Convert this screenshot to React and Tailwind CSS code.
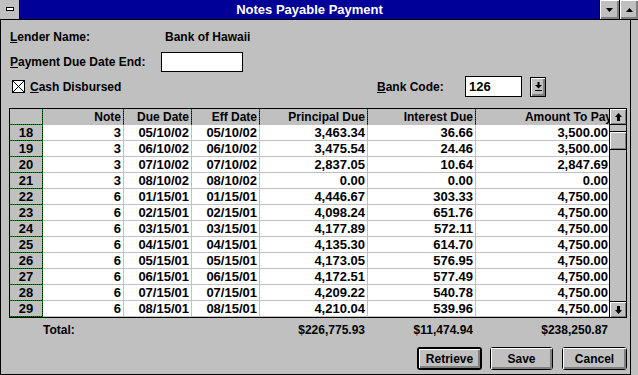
import React from 'react';

const rows = [
  ['18', '3', '05/10/02', '05/10/02', '3,463.34', '36.66', '3,500.00'],
  ['19', '3', '06/10/02', '06/10/02', '3,475.54', '24.46', '3,500.00'],
  ['20', '3', '07/10/02', '07/10/02', '2,837.05', '10.64', '2,847.69'],
  ['21', '3', '08/10/02', '08/10/02', '0.00', '0.00', '0.00'],
  ['22', '6', '01/15/01', '01/15/01', '4,446.67', '303.33', '4,750.00'],
  ['23', '6', '02/15/01', '02/15/01', '4,098.24', '651.76', '4,750.00'],
  ['24', '6', '03/15/01', '03/15/01', '4,177.89', '572.11', '4,750.00'],
  ['25', '6', '04/15/01', '04/15/01', '4,135.30', '614.70', '4,750.00'],
  ['26', '6', '05/15/01', '05/15/01', '4,173.05', '576.95', '4,750.00'],
  ['27', '6', '06/15/01', '06/15/01', '4,172.51', '577.49', '4,750.00'],
  ['28', '6', '07/15/01', '07/15/01', '4,209.22', '540.78', '4,750.00'],
  ['29', '6', '08/15/01', '08/15/01', '4,210.04', '539.96', '4,750.00'],
];

// column widths incl. gridline
const cols = [
  { label: 'Note', w: 'w-[81px]' },
  { label: 'Due Date', w: 'w-[68px]' },
  { label: 'Eff Date', w: 'w-[68px]' },
  { label: 'Principal Due', w: 'w-[108px]' },
  { label: 'Interest Due', w: 'w-[108px]' },
];

const bevel = 'shadow-[inset_1px_1px_0_#fff,inset_-1px_-1px_0_#808080]';
const bevel2 = 'shadow-[inset_1px_1px_0_#fff,inset_-1px_-1px_0_#808080,inset_-2px_-2px_0_#808080]';

const UpArrow = () => (
  <svg width="7" height="8" viewBox="0 0 7 8">
    <path d="M3.5 0 L7 4 L0 4 Z" fill="#000" />
    <rect x="2" y="4" width="3" height="4" fill="#000" />
  </svg>
);

const DownArrow = () => (
  <svg width="7" height="8" viewBox="0 0 7 8">
    <rect x="2" y="0" width="3" height="4" fill="#000" />
    <path d="M0 4 L7 4 L3.5 8 Z" fill="#000" />
  </svg>
);

const WinButton = ({ children, def, w }) => (
  <div className={`${w} h-[23px] bg-[#c0c0c0] rounded-[3px] ${def ? 'border-2' : 'border'} border-black`}>
    <div className={`w-full h-full flex items-center justify-center text-[12px] font-bold ${bevel2}`}>
      {children}
    </div>
  </div>
);

export default function App() {
  return (
    <div className="w-[638px] h-[375px] bg-[#c0c0c0] flex flex-col font-['Liberation_Sans',Arial,sans-serif] text-black select-none overflow-hidden">
      {/* Title bar */}
      <div className="h-[20px] flex border-b border-black shrink-0">
        <div className="w-[20px] border-r border-black bg-[#c0c0c0] flex items-start">
          <div className="mt-[7px] ml-[6px] w-[8px] h-[4px] bg-white border border-black"></div>
        </div>
        <div className="flex-1 bg-[#000098] text-white font-bold text-[13px] flex items-center justify-center">
          Notes Payable Payment
        </div>
        <div className={`w-[20px] border-l border-black bg-[#c0c0c0] flex items-center justify-center ${bevel2}`}>
          <svg width="7" height="4" viewBox="0 0 7 4"><path d="M0 0 L7 0 L3.5 4 Z" fill="#000" /></svg>
        </div>
        <div className={`w-[19px] border-l border-black bg-[#c0c0c0] flex items-center justify-center ${bevel2}`}>
          <svg width="7" height="4" viewBox="0 0 7 4"><path d="M3.5 0 L7 4 L0 4 Z" fill="#000" /></svg>
        </div>
      </div>

      {/* Client */}
      <div className="flex-1 flex">
        <div className="w-[631px] border-l border-r border-b border-black pl-[8px] flex flex-col">
          {/* Lender */}
          <div className="mt-[10px] h-[14px] flex items-center pl-[1px] text-[12px] font-bold">
            <div className="w-[155px]"><span className="underline">L</span>ender Name:</div>
            <div>Bank of Hawaii</div>
          </div>

          {/* Payment due */}
          <div className="mt-[8px] h-[20px] flex items-center pl-[1px] text-[12px] font-bold">
            <div className="w-[151px]"><span className="underline">P</span>ayment Due Date End:</div>
            <div className="w-[82px] h-[20px] bg-white border border-black"></div>
          </div>

          {/* Cash / bank code */}
          <div className="mt-[4px] h-[21px] flex items-center text-[12px] font-bold">
            <div className="w-[368px] flex items-center pl-[3px]">
              <svg width="13" height="13" viewBox="0 0 13 13" className="shrink-0">
                <rect x="0.5" y="0.5" width="12" height="12" fill="#fff" stroke="#000" />
                <path d="M1 1 L12 12 M12 1 L1 12" stroke="#000" strokeWidth="1" />
              </svg>
              <span className="ml-[5px]"><span className="underline">C</span>ash Disbursed</span>
            </div>
            <div className="w-[88px]"><span className="underline">B</span>ank Code:</div>
            <div className="w-[57px] h-[21px] bg-white border border-black flex items-center pl-[3px] text-[13px]">126</div>
            <div className={`ml-[8px] w-[16px] h-[20px] border border-black bg-[#c0c0c0] flex items-center justify-center ${bevel2}`}>
              <svg width="7" height="9" viewBox="0 0 7 9">
                <rect x="2.5" y="0" width="2" height="3" fill="#000" />
                <path d="M0 3 L7 3 L3.5 6.5 Z" fill="#000" />
                <rect x="0" y="8" width="7" height="1" fill="#000" />
              </svg>
            </div>
          </div>

          {/* Grid */}
          <div className="mt-[11px] w-[618px] h-[210px] border border-black flex bg-white">
            <div className="w-[599px] flex flex-col">
              {/* header */}
              <div className="h-[16px] flex bg-black text-[12px] font-bold">
                <div className="w-[33px] bg-[#c0c0c0] bg-clip-padding border-r border-b border-dotted border-[#008000]"></div>
                {cols.map((c) => (
                  <div key={c.label} className={`${c.w} bg-[#c0c0c0] bg-clip-padding border-r border-dotted border-[#008000] flex items-center justify-end pr-[2px] whitespace-nowrap`}>
                    {c.label}
                  </div>
                ))}
                <div className="w-[133px] bg-[#c0c0c0] flex items-center justify-end overflow-hidden whitespace-nowrap">
                  <span className="mr-[-3px]">Amount To Pay</span>
                </div>
              </div>
              {/* rows */}
              {rows.map((r) => (
                <div key={r[0]} className="h-[16px] flex text-[13px] font-bold">
                  <div className="w-[33px] bg-black">
                    <div className="w-full h-full bg-[#c0c0c0] bg-clip-padding border-r border-b border-dotted border-[#008000] flex items-center justify-center">
                      {r[0]}
                    </div>
                  </div>
                  {cols.map((c, i) => (
                    <div key={c.label} className={`${c.w} border-r border-b border-[#c0c0c0] flex items-center justify-end pr-[2px]`}>
                      {r[i + 1]}
                    </div>
                  ))}
                  <div className="w-[133px] border-b border-[#c0c0c0] flex items-center justify-end pr-[1px]">
                    {r[6]}
                  </div>
                </div>
              ))}
            </div>
            {/* scrollbar */}
            <div className="w-[17px] border-l border-black bg-[#c0c0c0] flex flex-col">
              <div className={`h-[16px] border-b border-black flex items-center justify-center ${bevel}`}>
                <UpArrow />
              </div>
              <div className="flex-1">
                <div className={`mt-[6px] h-[19px] border-t border-b border-black ${bevel}`}></div>
              </div>
              <div className={`h-[16px] border-t border-black flex items-center justify-center ${bevel}`}>
                <DownArrow />
              </div>
            </div>
          </div>

          {/* Totals */}
          <div className="mt-[5px] h-[14px] flex items-center text-[12px] font-bold">
            <div className="w-[34px]"></div>
            <div className="w-[217px]">Total:</div>
            <div className="w-[108px] text-right pr-[3px]">$226,775.93</div>
            <div className="w-[108px] text-right pr-[3px]">$11,474.94</div>
            <div className="w-[133px] text-right pr-[1px]">$238,250.87</div>
          </div>

          {/* Buttons */}
          <div className="mt-[10px] flex">
            <div className="ml-[408px]"><WinButton def w="w-[65px]">Retrieve</WinButton></div>
            <div className="ml-[8px]"><WinButton w="w-[63px]">Save</WinButton></div>
            <div className="ml-[9px]"><WinButton w="w-[65px]">Cancel</WinButton></div>
          </div>
        </div>
      </div>
    </div>
  );
}
